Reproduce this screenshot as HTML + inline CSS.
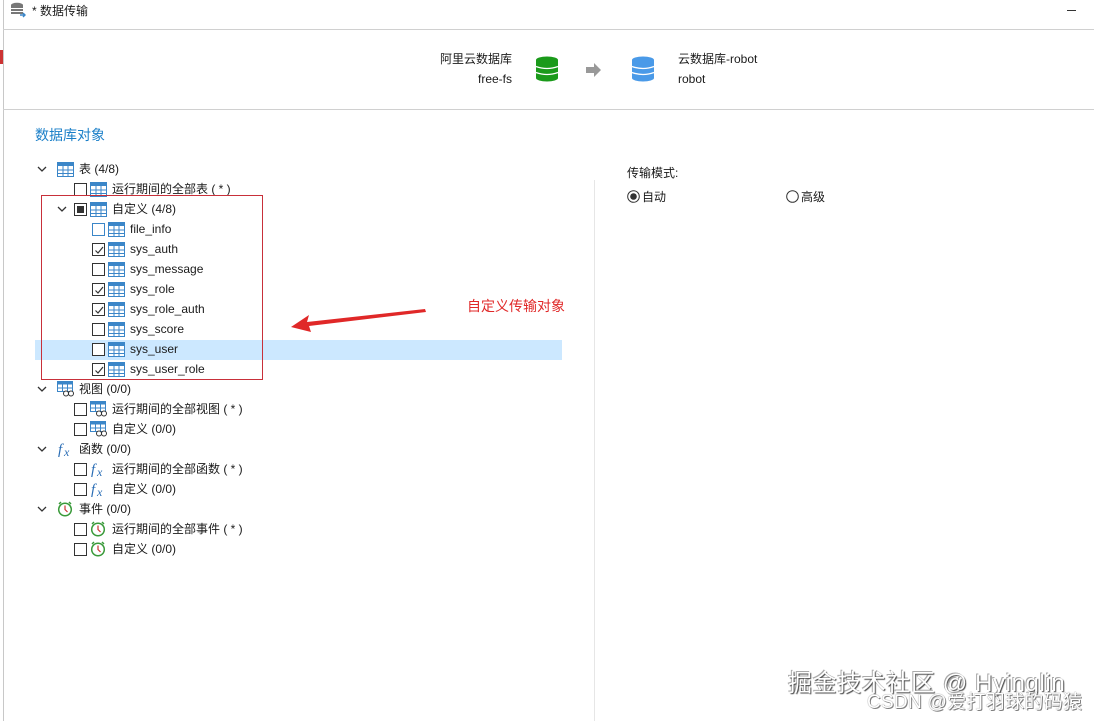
<!DOCTYPE html>
<html><head><meta charset="utf-8"><style>
*{margin:0;padding:0;box-sizing:border-box}
body{width:1094px;height:721px;background:#fff;position:relative;overflow:hidden;font-family:"Liberation Sans","Noto Sans CJK SC",sans-serif;font-size:12px;color:#1a1a1a}
.a{position:absolute}
.t{position:absolute;line-height:16px;white-space:nowrap}
.cb{position:absolute;width:13px;height:13px;border:1px solid #333;background:#fff}
.cb.b{border-color:#3b86c8}
.ic{position:absolute}
.ch{position:absolute}
</style></head><body>
<div class="a" style="left:3px;top:0;width:1px;height:721px;background:#c8c8c8"></div>
<div class="a" style="left:0;top:50px;width:3px;height:14px;background:#c33"></div>
<svg class="a" style="left:10px;top:2px" width="16" height="16"><ellipse cx="7" cy="3" rx="6" ry="2.2" fill="#777"/><rect x="1" y="3" width="12" height="9" fill="#777"/><path d="M1 6.5h12M1 9.5h12" stroke="#fff"/><path d="M10 13h5M13 11l2 2-2 2" stroke="#3b86c8" fill="none" stroke-width="1.4"/></svg>
<div class="t" style="left:32px;top:3px">* 数据传输</div>
<div class="a" style="left:1067px;top:10px;width:9px;height:1px;background:#333"></div>
<div class="a" style="left:3px;top:29px;width:1091px;height:1px;background:#d0d0d0"></div>
<div class="t" style="left:380px;width:132px;text-align:right;top:51px">阿里云数据库</div>
<div class="t" style="left:380px;width:132px;text-align:right;top:71px">free-fs</div>
<svg class="a" style="left:535px;top:56px" width="24" height="26"><ellipse cx="12" cy="4" rx="11" ry="3.5" fill="#1a9a1a"/><rect x="1" y="4" width="22" height="18" fill="#1a9a1a"/><ellipse cx="12" cy="22" rx="11" ry="3.5" fill="#1a9a1a"/><path d="M1 10.5q11 4 22 0M1 16.5q11 4 22 0" stroke="#fff" stroke-width="1.3" fill="none"/></svg>
<svg class="a" style="left:586px;top:63px" width="16" height="14"><path d="M0 4h8V0l7 7-7 7v-4H0z" fill="#999"/></svg>
<svg class="a" style="left:631px;top:56px" width="24" height="26"><ellipse cx="12" cy="4" rx="11" ry="3.5" fill="#4a9ae8"/><rect x="1" y="4" width="22" height="18" fill="#4a9ae8"/><ellipse cx="12" cy="22" rx="11" ry="3.5" fill="#4a9ae8"/><path d="M1 10.5q11 4 22 0M1 16.5q11 4 22 0" stroke="#fff" stroke-width="1.3" fill="none"/></svg>
<div class="t" style="left:678px;top:51px">云数据库-robot</div>
<div class="t" style="left:678px;top:71px">robot</div>
<div class="a" style="left:3px;top:109px;width:1091px;height:1px;background:#d0d0d0"></div>
<div class="t" style="left:35px;top:126px;font-size:14px;line-height:18px;color:#1a7fc8">数据库对象</div>
<div class="a" style="left:594px;top:180px;width:1px;height:541px;background:#e6e6e6"></div>
<div class="t" style="left:627px;top:165px">传输模式:</div>
<svg class="a" style="left:627px;top:190px" width="13" height="13"><circle cx="6.5" cy="6.5" r="5.8" fill="none" stroke="#333"/><circle cx="6.5" cy="6.5" r="3.3" fill="#333"/></svg>
<div class="t" style="left:642px;top:189px">自动</div>
<svg class="a" style="left:786px;top:190px" width="13" height="13"><circle cx="6.5" cy="6.5" r="5.8" fill="none" stroke="#333"/></svg>
<div class="t" style="left:801px;top:189px">高级</div>
<div class="a" style="left:35px;top:340px;width:527px;height:20px;background:#cce8ff"></div>
<svg width="0" height="0" style="position:absolute"><defs>
<g id="tb"><rect x=".5" y=".5" width="16" height="14" fill="#fff" stroke="#3b86c8"/><rect x="0" y="0" width="17" height="4" fill="#3b86c8"/><path d="M6 4v11M11 4v11M0 8h17M0 11.5h17" stroke="#3b86c8"/></g>
<g id="chev"><path d="M1 1l4 4 4-4" stroke="#333" stroke-width="1.3" fill="none"/></g>
<g id="ck"><path d="M2.5 6.5l2.5 2.5 5-6" stroke="#333" stroke-width="1.2" fill="none"/></g>
<g id="vw"><rect x=".5" y=".5" width="15" height="10" fill="#fff" stroke="#3b86c8"/><rect x="0" y="0" width="16" height="3.5" fill="#3b86c8"/><path d="M5.5 3v8M10.5 3v8M0 7h16" stroke="#3b86c8"/><circle cx="9" cy="12.5" r="2.5" fill="#fff" stroke="#333"/><circle cx="14" cy="12.5" r="2.5" fill="#fff" stroke="#333"/></g>
<g id="fx"><text x="1" y="13" font-family="Liberation Serif,serif" font-style="italic" font-size="15" fill="#2a6db5">f</text><text x="7" y="15" font-family="Liberation Serif,serif" font-style="italic" font-size="12" fill="#2a6db5">x</text></g>
<g id="clk"><circle cx="8" cy="8.5" r="6.3" fill="#fff" stroke="#3a9a3a" stroke-width="1.5"/><path d="M8 4.5v4l2.5 2.5" stroke="#c33" stroke-width="1.2" fill="none"/><path d="M2 3l2-2M14 3l-2-2" stroke="#3a9a3a" stroke-width="1.5"/></g>
</defs></svg>
<svg class="ch" style="left:37px;top:166px" width="10" height="7"><use href="#chev"/></svg>
<svg class="ic" style="left:57px;top:162px" width="17" height="15"><use href="#tb"/></svg>
<div class="t" style="left:79px;top:161px">表 (4/8)</div>
<div class="cb" style="left:74px;top:183px"></div>
<svg class="ic" style="left:90px;top:182px" width="17" height="15"><use href="#tb"/></svg>
<div class="t" style="left:112px;top:181px">运行期间的全部表 ( * )</div>
<svg class="ch" style="left:57px;top:206px" width="10" height="7"><use href="#chev"/></svg>
<div class="cb" style="left:74px;top:203px"><div class="a" style="left:2px;top:2px;width:7px;height:7px;background:#333"></div></div>
<svg class="ic" style="left:90px;top:202px" width="17" height="15"><use href="#tb"/></svg>
<div class="t" style="left:112px;top:201px">自定义 (4/8)</div>
<div class="cb b" style="left:92px;top:223px"></div>
<svg class="ic" style="left:108px;top:222px" width="17" height="15"><use href="#tb"/></svg>
<div class="t" style="left:130px;top:221px">file_info</div>
<div class="cb" style="left:92px;top:243px"><svg width="11" height="11"><use href="#ck"/></svg></div>
<svg class="ic" style="left:108px;top:242px" width="17" height="15"><use href="#tb"/></svg>
<div class="t" style="left:130px;top:241px">sys_auth</div>
<div class="cb" style="left:92px;top:263px"></div>
<svg class="ic" style="left:108px;top:262px" width="17" height="15"><use href="#tb"/></svg>
<div class="t" style="left:130px;top:261px">sys_message</div>
<div class="cb" style="left:92px;top:283px"><svg width="11" height="11"><use href="#ck"/></svg></div>
<svg class="ic" style="left:108px;top:282px" width="17" height="15"><use href="#tb"/></svg>
<div class="t" style="left:130px;top:281px">sys_role</div>
<div class="cb" style="left:92px;top:303px"><svg width="11" height="11"><use href="#ck"/></svg></div>
<svg class="ic" style="left:108px;top:302px" width="17" height="15"><use href="#tb"/></svg>
<div class="t" style="left:130px;top:301px">sys_role_auth</div>
<div class="cb" style="left:92px;top:323px"></div>
<svg class="ic" style="left:108px;top:322px" width="17" height="15"><use href="#tb"/></svg>
<div class="t" style="left:130px;top:321px">sys_score</div>
<div class="cb" style="left:92px;top:343px"></div>
<svg class="ic" style="left:108px;top:342px" width="17" height="15"><use href="#tb"/></svg>
<div class="t" style="left:130px;top:341px">sys_user</div>
<div class="cb" style="left:92px;top:363px"><svg width="11" height="11"><use href="#ck"/></svg></div>
<svg class="ic" style="left:108px;top:362px" width="17" height="15"><use href="#tb"/></svg>
<div class="t" style="left:130px;top:361px">sys_user_role</div>
<div class="a" style="left:41px;top:195px;width:222px;height:185px;border:1px solid #c8303a"></div>
<svg class="ch" style="left:37px;top:386px" width="10" height="7"><use href="#chev"/></svg>
<svg class="ic" style="left:57px;top:381px" width="17" height="16"><use href="#vw"/></svg>
<div class="t" style="left:79px;top:381px">视图 (0/0)</div>
<div class="cb" style="left:74px;top:403px"></div>
<svg class="ic" style="left:90px;top:401px" width="17" height="16"><use href="#vw"/></svg>
<div class="t" style="left:112px;top:401px">运行期间的全部视图 ( * )</div>
<div class="cb" style="left:74px;top:423px"></div>
<svg class="ic" style="left:90px;top:421px" width="17" height="16"><use href="#vw"/></svg>
<div class="t" style="left:112px;top:421px">自定义 (0/0)</div>
<svg class="ch" style="left:37px;top:446px" width="10" height="7"><use href="#chev"/></svg>
<svg class="ic" style="left:57px;top:441px" width="18" height="17"><use href="#fx"/></svg>
<div class="t" style="left:79px;top:441px">函数 (0/0)</div>
<div class="cb" style="left:74px;top:463px"></div>
<svg class="ic" style="left:90px;top:461px" width="18" height="17"><use href="#fx"/></svg>
<div class="t" style="left:112px;top:461px">运行期间的全部函数 ( * )</div>
<div class="cb" style="left:74px;top:483px"></div>
<svg class="ic" style="left:90px;top:481px" width="18" height="17"><use href="#fx"/></svg>
<div class="t" style="left:112px;top:481px">自定义 (0/0)</div>
<svg class="ch" style="left:37px;top:506px" width="10" height="7"><use href="#chev"/></svg>
<svg class="ic" style="left:57px;top:501px" width="16" height="16"><use href="#clk"/></svg>
<div class="t" style="left:79px;top:501px">事件 (0/0)</div>
<div class="cb" style="left:74px;top:523px"></div>
<svg class="ic" style="left:90px;top:521px" width="16" height="16"><use href="#clk"/></svg>
<div class="t" style="left:112px;top:521px">运行期间的全部事件 ( * )</div>
<div class="cb" style="left:74px;top:543px"></div>
<svg class="ic" style="left:90px;top:541px" width="16" height="16"><use href="#clk"/></svg>
<div class="t" style="left:112px;top:541px">自定义 (0/0)</div>
<svg class="a" style="left:285px;top:300px" width="150" height="40"><path d="M140 9L22 22l2-7L6 27l20 5-2-6L141 12z" fill="#e02828"/></svg>
<div class="t" style="left:467px;top:297px;font-size:14px;line-height:18px;color:#e02828">自定义传输对象</div>
<div class="t" style="left:788px;top:669px;font-size:24px;line-height:30px;letter-spacing:0.6px;color:#fff;text-shadow:1px 1px 1px #444,-1px -1px 0 #aaa">掘金技术社区 @ Hyinglin</div>
<div class="t" style="left:867px;top:691px;font-size:19px;line-height:24px;letter-spacing:0.3px;color:#fff;text-shadow:0 0 1px #555,1px 1px 0 #888">CSDN @爱打羽球的码猿</div>
</body></html>
